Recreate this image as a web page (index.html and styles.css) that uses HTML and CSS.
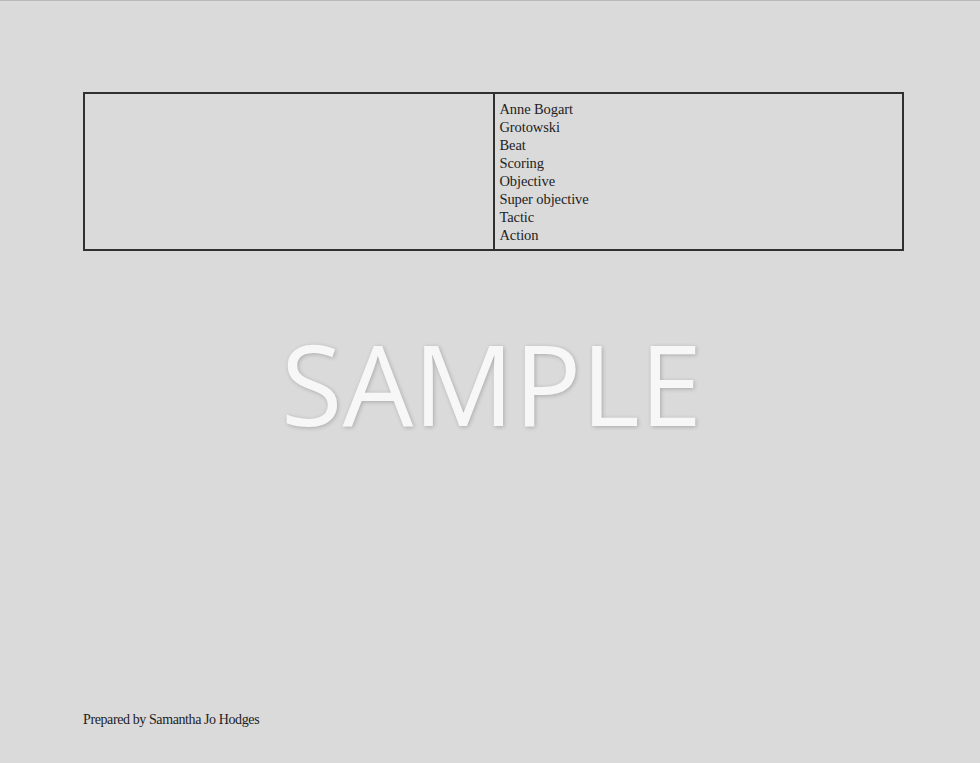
FILE: index.html
```html
<!DOCTYPE html>
<html>
<head>
<meta charset="utf-8">
<link rel="stylesheet" href="styles.css">
</head>
<body>
<div class="page">
  <table class="grid">
    <tr>
      <td class="cell left"></td>
      <td class="cell right">
        <div class="item">Anne Bogart</div>
        <div class="item">Grotowski</div>
        <div class="item">Beat</div>
        <div class="item">Scoring</div>
        <div class="item">Objective</div>
        <div class="item">Super objective</div>
        <div class="item">Tactic</div>
        <div class="item">Action</div>
      </td>
    </tr>
  </table>
  <div class="watermark">SAMPLE</div>
  <div class="footer">Prepared by Samantha Jo Hodges</div>
</div>
</body>
</html>
```
FILE: styles.css
```css
html, body {
  margin: 0;
  padding: 0;
  background: #dadada;
}
body {
  border-top: 1px solid #b9b9b9;
  height: 762px;
  overflow: hidden;
}
.page {
  padding: 91px 76px 0 83px;
  display: flex;
  flex-direction: column;
}
.grid {
  width: 821px;
  height: 158px;
  border-collapse: collapse;
  border: 2px solid #303030;
}
.cell {
  width: 50%;
  vertical-align: top;
  padding: 0;
}
.left {
  border-right: 2px solid #303030;
}
.right {
  padding: 6px 6px 5px 5px;
}
.item {
  font-family: "Liberation Serif", serif;
  font-size: 14.5px;
  line-height: 18px;
  color: #222;
  letter-spacing: -0.1px;
}
.watermark {
  font-family: "Open Sans", sans-serif;
  font-size: 112px;
  color: #f7f7f7;
  text-align: center;
  line-height: 1;
  margin-top: 76px;
  margin-right: -76px;
  margin-left: -80px;
  text-shadow: 1px 1px 4px rgba(0,0,0,0.22);
  font-weight: 400;
}
.footer {
  font-family: "Liberation Serif", serif;
  font-size: 14px;
  color: #222;
  letter-spacing: -0.4px;
  margin-top: 273px;
}
```
